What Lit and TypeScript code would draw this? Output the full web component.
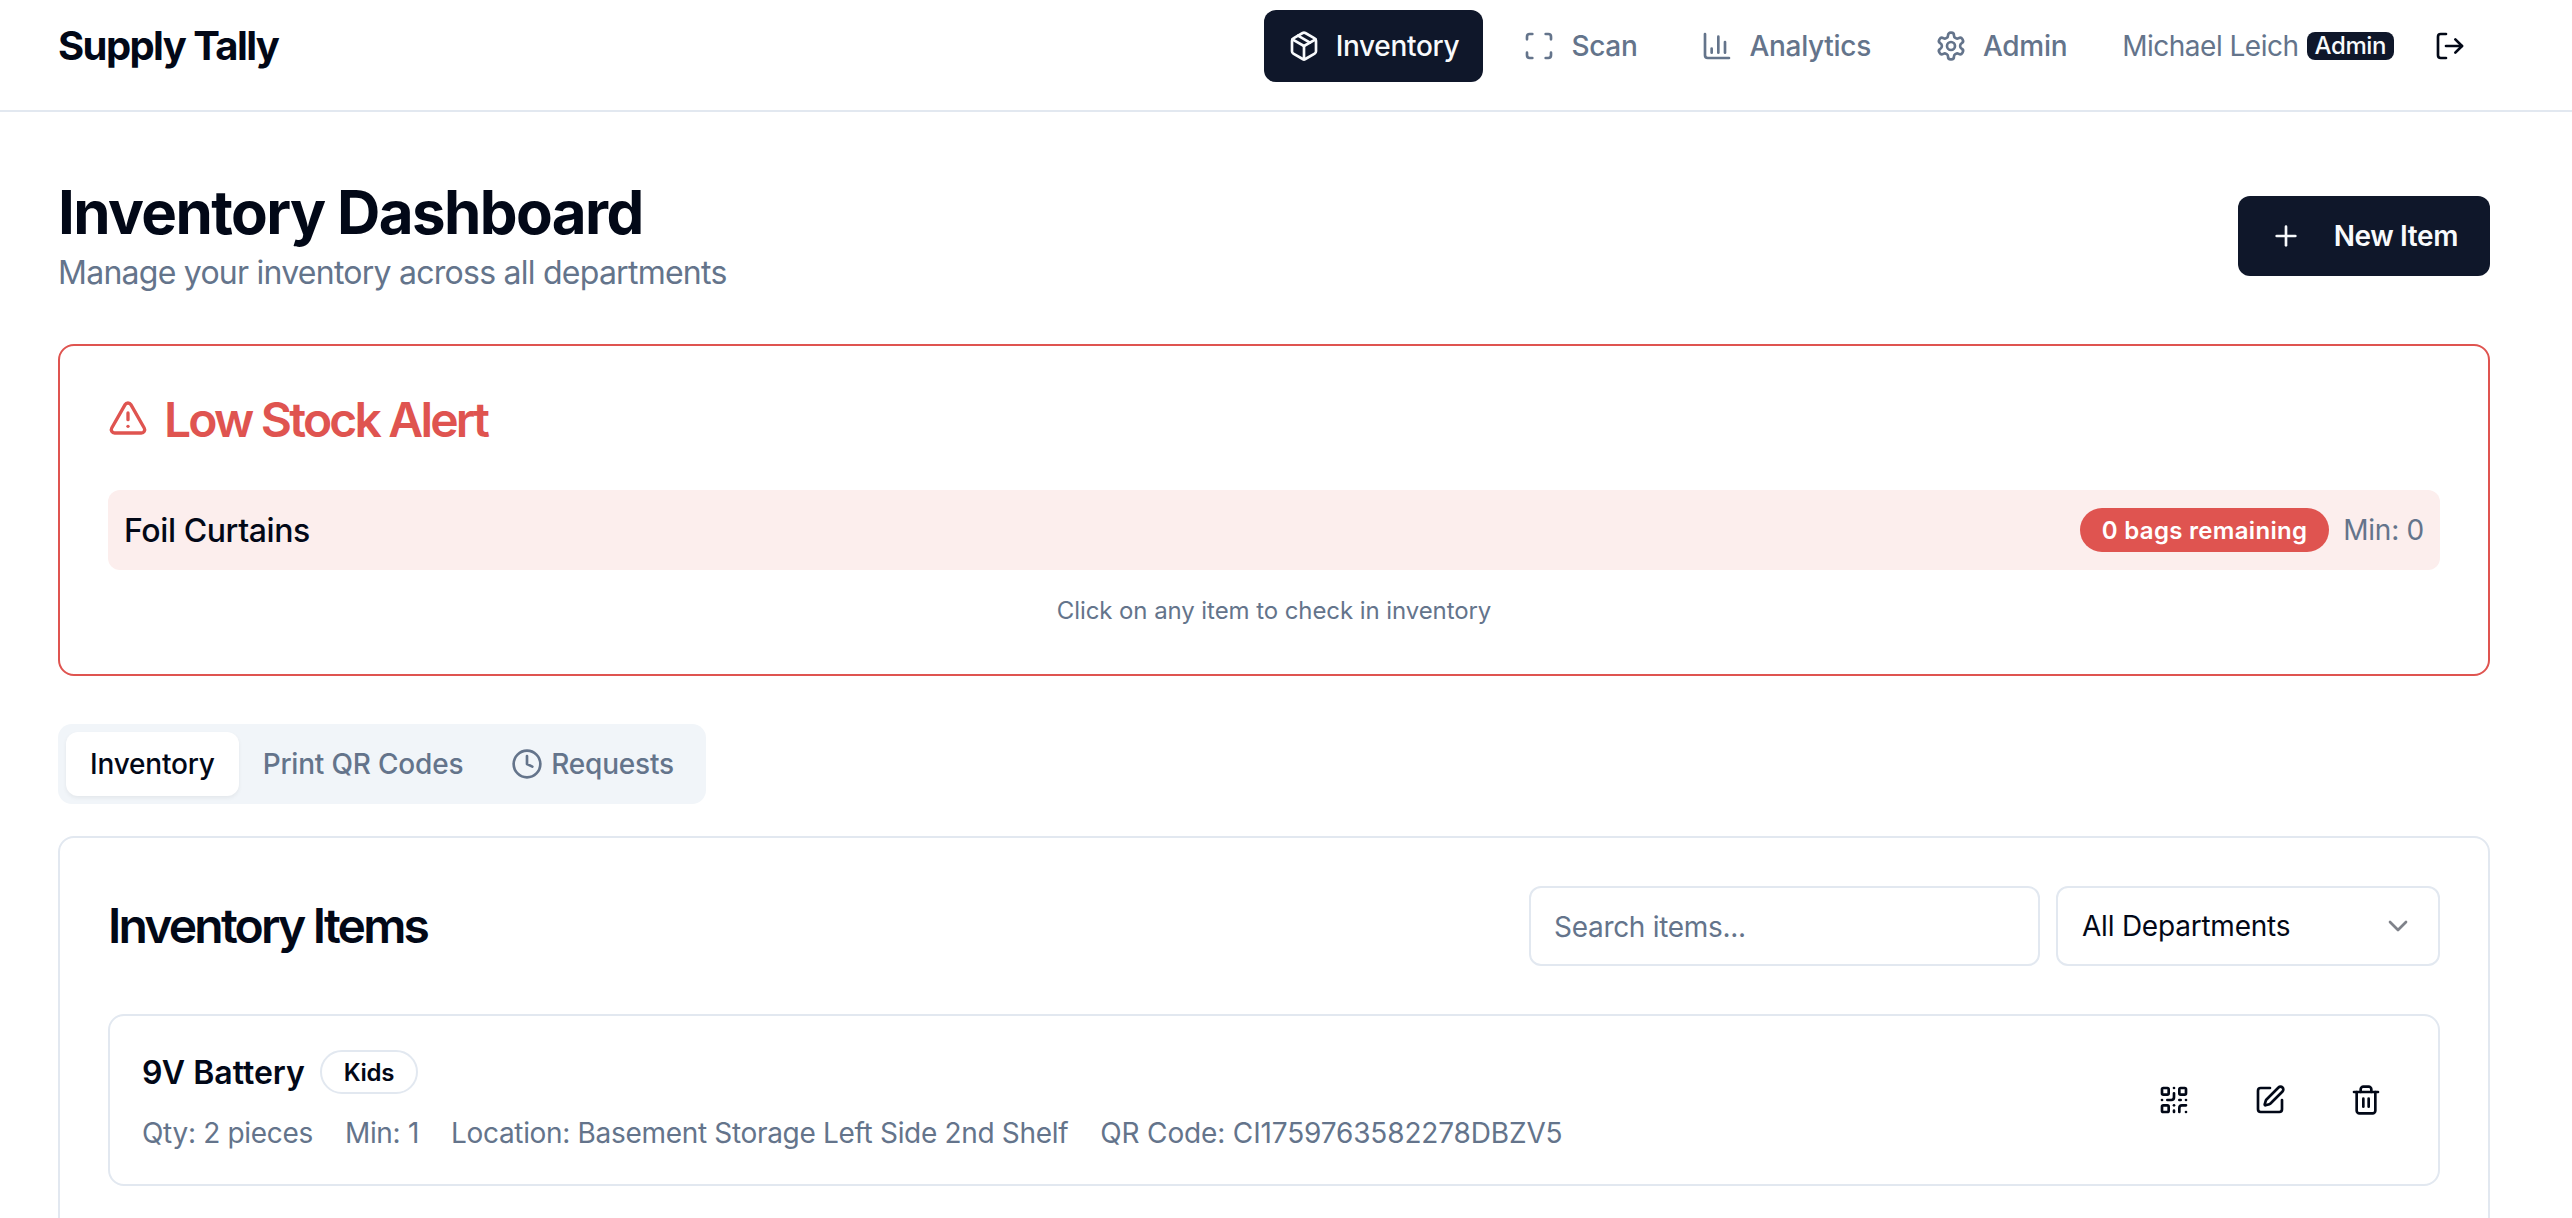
import { LitElement, html, css, svg } from "lit";
import { customElement } from "lit/decorators.js";

const icon = (body: unknown, cls = "") =>
  html`<svg class="ic ${cls}" viewBox="0 0 24 24" fill="none" stroke="currentColor" stroke-width="2" stroke-linecap="round" stroke-linejoin="round">${body}</svg>`;

const I = {
  pkg: svg`<path d="m7.5 4.27 9 5.15"/><path d="M21 8a2 2 0 0 0-1-1.73l-7-4a2 2 0 0 0-2 0l-7 4A2 2 0 0 0 3 8v8a2 2 0 0 0 1 1.73l7 4a2 2 0 0 0 2 0l7-4A2 2 0 0 0 21 16Z"/><path d="m3.3 7 8.7 5 8.7-5"/><path d="M12 22V12"/>`,
  scan: svg`<path d="M3 7V5a2 2 0 0 1 2-2h2"/><path d="M17 3h2a2 2 0 0 1 2 2v2"/><path d="M21 17v2a2 2 0 0 1-2 2h-2"/><path d="M7 21H5a2 2 0 0 1-2-2v-2"/>`,
  chart: svg`<path d="M3 3v16a2 2 0 0 0 2 2h16"/><path d="M18 17V9"/><path d="M13 17V5"/><path d="M8 17v-3"/>`,
  gear: svg`<path d="M12.22 2h-.44a2 2 0 0 0-2 2v.18a2 2 0 0 1-1 1.73l-.43.25a2 2 0 0 1-2 0l-.15-.08a2 2 0 0 0-2.73.73l-.22.38a2 2 0 0 0 .73 2.73l.15.1a2 2 0 0 1 1 1.72v.51a2 2 0 0 1-1 1.74l-.15.09a2 2 0 0 0-.73 2.73l.22.38a2 2 0 0 0 2.73.73l.15-.08a2 2 0 0 1 2 0l.43.25a2 2 0 0 1 1 1.73V20a2 2 0 0 0 2 2h.44a2 2 0 0 0 2-2v-.18a2 2 0 0 1 1-1.73l.43-.25a2 2 0 0 1 2 0l.15.08a2 2 0 0 0 2.73-.73l.22-.39a2 2 0 0 0-.73-2.73l-.15-.08a2 2 0 0 1-1-1.74v-.5a2 2 0 0 1 1-1.74l.15-.09a2 2 0 0 0 .73-2.73l-.22-.38a2 2 0 0 0-2.73-.73l-.15.08a2 2 0 0 1-2 0l-.43-.25a2 2 0 0 1-1-1.73V4a2 2 0 0 0-2-2z"/><circle cx="12" cy="12" r="3"/>`,
  logout: svg`<path d="m16 17 5-5-5-5"/><path d="M21 12H9"/><path d="M9 21H5a2 2 0 0 1-2-2V5a2 2 0 0 1 2-2h4"/>`,
  plus: svg`<path d="M5 12h14"/><path d="M12 5v14"/>`,
  alert: svg`<path d="m21.73 18-8-14a2 2 0 0 0-3.48 0l-8 14A2 2 0 0 0 4 21h16a2 2 0 0 0 1.73-3"/><path d="M12 9v4"/><path d="M12 17h.01"/>`,
  clock: svg`<circle cx="12" cy="12" r="10"/><polyline points="12 6 12 12 16 14"/>`,
  qr: svg`<rect width="5" height="5" x="3" y="3" rx="1"/><rect width="5" height="5" x="16" y="3" rx="1"/><rect width="5" height="5" x="3" y="16" rx="1"/><path d="M21 16h-3a2 2 0 0 0-2 2v3"/><path d="M21 21v.01"/><path d="M12 7v3a2 2 0 0 1-2 2H7"/><path d="M3 12h.01"/><path d="M12 3h.01"/><path d="M12 16v.01"/><path d="M16 12h1"/><path d="M21 12v.01"/><path d="M12 21v-1"/>`,
  pen: svg`<path d="M12 3H5a2 2 0 0 0-2 2v14a2 2 0 0 0 2 2h14a2 2 0 0 0 2-2v-7"/><path d="M18.375 2.625a1 1 0 0 1 3 3l-9.013 9.014a2 2 0 0 1-.853.505l-2.873.84a.5.5 0 0 1-.62-.62l.84-2.873a2 2 0 0 1 .506-.852z"/>`,
  trash: svg`<path d="M3 6h18"/><path d="M19 6v14c0 1-1 2-2 2H7c-1 0-2-1-2-2V6"/><path d="M8 6V4c0-1 1-2 2-2h4c1 0 2 1 2 2v2"/><line x1="10" x2="10" y1="11" y2="17"/><line x1="14" x2="14" y1="11" y2="17"/>`,
  chev: svg`<path d="m6 9 6 6 6-6"/>`,
};

@customElement("app-root")
export class AppRoot extends LitElement {
  static styles = css`
    :host {
      display: block;
      height: 1218px;
      overflow: hidden;
      background: #fff;
      color: #020817;
      font-family: Inter, "Noto Sans", sans-serif;
      font-size: 28px;
    }
    * { box-sizing: border-box; }
    .ic { width: 32px; height: 32px; flex: none; display: block; }

    .nav {
      height: 112px;
      border-bottom: 2px solid #e2e8f0;
      padding: 10px 82px 28px 58px;
      display: flex;
      align-items: center;
      justify-content: space-between;
    }
    .logo { font-size: 40px; font-weight: 700; line-height: 56px; letter-spacing: -1.6px; }
    .links { display: flex; align-items: center; gap: 16px; }
    .link {
      height: 72px;
      padding: 0 24px;
      display: flex;
      align-items: center;
      gap: 16px;
      border-radius: 12px;
      color: #64748b;
      font-weight: 500;
      line-height: 40px;
      letter-spacing: -0.3px;
    }
    .link.on { background: #0f172a; color: #f8fafc; }
    .user { display: flex; align-items: center; gap: 8px; margin-left: 15px; color: #64748b; line-height: 40px; letter-spacing: -0.5px; }
    .role {
      background: #0f172a;
      color: #f8fafc;
      font-size: 24px;
      line-height: 28px;
      height: 28px;
      padding: 0 8px;
      border-radius: 8px;
      font-weight: 500;
      letter-spacing: -0.4px;
    }
    .logout { width: 80px; height: 72px; display: flex; align-items: center; justify-content: center; color: #020817; }

    .main { margin-left: 58px; width: 2432px; padding-top: 64px; }
    .head { display: flex; align-items: center; justify-content: space-between; margin-bottom: 48px; }
    h1 { margin: 0; font-size: 60px; line-height: 72px; font-weight: 700; letter-spacing: -1.6px; }
    .sub { font-size: 32px; line-height: 48px; color: #64748b; letter-spacing: -0.75px; padding-top: 1px; margin-bottom: -1px; }
    .newbtn {
      height: 80px;
      padding: 0 32px;
      background: #0f172a;
      color: #f8fafc;
      border-radius: 12px;
      display: flex;
      align-items: center;
      gap: 32px;
      font-weight: 600;
      letter-spacing: -0.4px;
    }

    .alert {
      border: 2px solid #df5450;
      border-radius: 16px;
      padding: 48px;
      margin-bottom: 48px;
    }
    h2 { margin: 0; font-size: 48px; line-height: 48px; font-weight: 600; letter-spacing: -2.8px; }
    .atitle { display: flex; align-items: center; gap: 16px; color: #df5450; margin-bottom: 48px; }
    .atitle .ic { width: 40px; height: 40px; }
    .atext { padding-top: 2px; margin-bottom: -2px; }
    .arow {
      height: 80px;
      background: #fceeed;
      border-radius: 12px;
      padding: 0 16px;
      display: flex;
      align-items: center;
      justify-content: space-between;
    }
    .aname { font-size: 32px; font-weight: 500; letter-spacing: -0.4px; }
    .aright { display: flex; align-items: center; gap: 14px; color: #64748b; letter-spacing: -0.25px; }
    .pill {
      height: 44px;
      padding: 0 22px;
      border-radius: 22px;
      background: #df5450;
      color: #fff;
      font-size: 24px;
      font-weight: 600;
      letter-spacing: 0.3px;
      display: flex;
      align-items: center;
    }
    .hint { margin-top: 24px; padding-top: 1px; margin-bottom: -1px; text-align: center; font-size: 24px; line-height: 32px; color: #64748b; letter-spacing: -0.08px; }

    .tabs {
      display: inline-flex;
      height: 80px;
      padding: 8px;
      background: #f1f5f9;
      border-radius: 14px;
      margin-bottom: 32px;
      vertical-align: top;
    }
    .tab {
      height: 64px;
      padding: 0 24px;
      display: flex;
      align-items: center;
      gap: 8px;
      color: #64748b;
      font-weight: 500;
      border-radius: 12px;
      letter-spacing: -0.2px;
    }
    .tab.on { background: #fff; color: #020817; box-shadow: 0 2px 4px rgba(0, 0, 0, 0.06); }

    .card { border: 2px solid #e2e8f0; border-radius: 16px; padding: 48px; height: 500px; }
    .chead { display: flex; align-items: center; justify-content: space-between; margin-bottom: 48px; }
    .filters { display: flex; gap: 16px; }
    input {
      width: 511px;
      height: 80px;
      border: 2px solid #e2e8f0;
      border-radius: 12px;
      padding: 2px 24px 0 23px;
      font: inherit;
      letter-spacing: -0.3px;
      color: inherit;
      outline: none;
      background: #fff;
    }
    input::placeholder { color: #64748b; }
    .select {
      width: 384px;
      height: 80px;
      border: 2px solid #e2e8f0;
      border-radius: 12px;
      padding: 0 24px;
      display: flex;
      align-items: center;
      justify-content: space-between;
      letter-spacing: -0.22px;
    }
    .select .ic { opacity: 0.5; color: #020817; }

    .item {
      height: 172px;
      border: 2px solid #e2e8f0;
      border-radius: 16px;
      padding: 0 32px;
      display: flex;
      align-items: center;
      justify-content: space-between;
    }
    .info { padding-top: 3px; }
    .tline { display: flex; align-items: center; gap: 15px; margin-bottom: 19px; height: 44px; }
    .iname { font-size: 32px; font-weight: 600; }
    .tag {
      height: 44px;
      padding: 0 22px;
      border: 2px solid #e2e8f0;
      border-radius: 22px;
      font-size: 24px;
      font-weight: 600;
      letter-spacing: -0.35px;
      display: flex;
      align-items: center;
    }
    .meta { display: flex; gap: 32px; color: #64748b; line-height: 40px; letter-spacing: -0.32px; }
    .code { letter-spacing: -0.15px; }
    .actions { display: flex; gap: 16px; }
    .act { width: 80px; height: 72px; display: flex; align-items: center; justify-content: center; color: #020817; }
  `;

  render() {
    return html`
      <header class="nav">
        <div class="logo">Supply Tally</div>
        <nav class="links">
          <a class="link on">${icon(I.pkg)}Inventory</a>
          <a class="link">${icon(I.scan)}Scan</a>
          <a class="link">${icon(I.chart)}Analytics</a>
          <a class="link">${icon(I.gear)}Admin</a>
          <div class="user">Michael Leich <span class="role">Admin</span></div>
          <a class="logout">${icon(I.logout)}</a>
        </nav>
      </header>
      <main class="main">
        <section class="head">
          <div>
            <h1>Inventory Dashboard</h1>
            <div class="sub">Manage your inventory across all departments</div>
          </div>
          <div class="newbtn">${icon(I.plus)}New Item</div>
        </section>
        <section class="alert">
          <h2 class="atitle">${icon(I.alert)}<span class="atext">Low Stock Alert</span></h2>
          <div class="arow">
            <span class="aname">Foil Curtains</span>
            <div class="aright"><span class="pill">0 bags remaining</span><span>Min: 0</span></div>
          </div>
          <div class="hint">Click on any item to check in inventory</div>
        </section>
        <div class="tabs">
          <div class="tab on">Inventory</div>
          <div class="tab">Print QR Codes</div>
          <div class="tab">${icon(I.clock)}Requests</div>
        </div>
        <section class="card">
          <div class="chead">
            <h2>Inventory Items</h2>
            <div class="filters">
              <input placeholder="Search items..." />
              <div class="select">All Departments ${icon(I.chev)}</div>
            </div>
          </div>
          <div class="item">
            <div class="info">
              <div class="tline"><span class="iname">9V Battery</span><span class="tag">Kids</span></div>
              <div class="meta">
                <span>Qty: 2 pieces</span><span>Min: 1</span>
                <span>Location: Basement Storage Left Side 2nd Shelf</span>
                <span class="code">QR Code: CI1759763582278DBZV5</span>
              </div>
            </div>
            <div class="actions">
              <div class="act">${icon(I.qr)}</div>
              <div class="act">${icon(I.pen)}</div>
              <div class="act">${icon(I.trash)}</div>
            </div>
          </div>
        </section>
      </main>
    `;
  }
}
